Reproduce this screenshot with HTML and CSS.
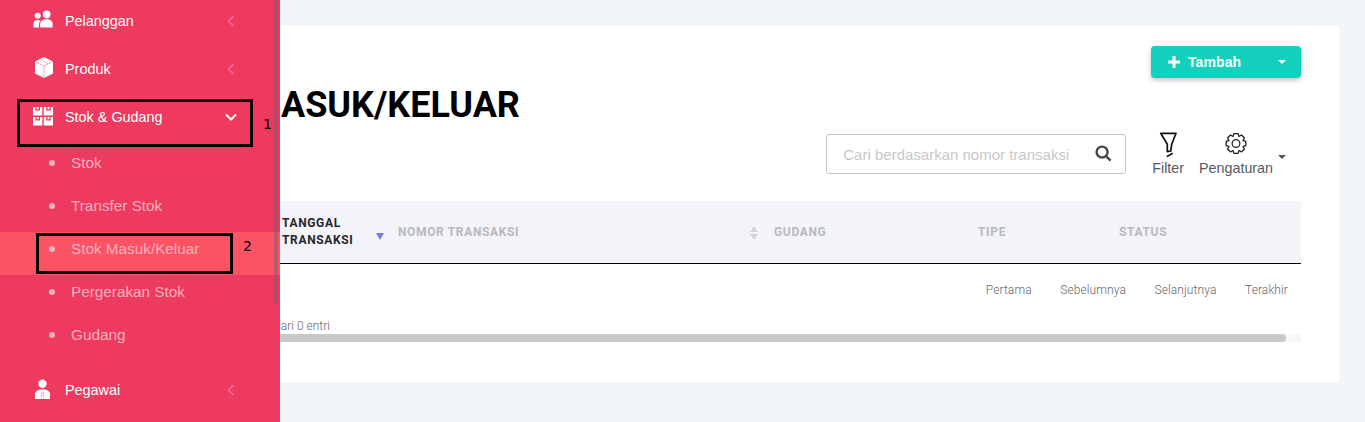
FILE: index.html
```html
<!DOCTYPE html>
<html lang="en">
<head>
    <meta charset="UTF-8">
    <meta name="viewport" content="width=device-width, initial-scale=1.0">
    <title>Stok Masuk/Keluar</title>
    <link rel="stylesheet" href="styles.css">
</head>
<body>
    <!-- Sidebar -->
    <aside class="sidebar">
        <nav class="nav">
            <div class="nav-item">
                <svg class="nav-icon" viewBox="0 0 20 20"><circle cx="4.7" cy="4.8" r="3"/><circle cx="13.7" cy="3.4" r="3.8"/><path d="M0.5 16.5 V12.5 C0.5 10.2 2.4 9 4.7 9 C5.8 9 6.8 9.2 7.6 9.7 C6.6 10.8 6 12 6 13.5 V16.5 Z"/><path d="M7.2 16.5 V13 C7.2 10 9.6 8.2 13.5 8.2 C17.4 8.2 19.6 10 19.6 13 V16.5 Z"/></svg>
                <span class="nav-label">Pelanggan</span>
                <svg class="nav-arrow" viewBox="0 0 8 12"><path d="M6.5 1 L1.5 6 L6.5 11"/></svg>
            </div>
            <div class="nav-item">
                <svg class="nav-icon" viewBox="0 0 20 20"><path d="M11 -2 L20 2.5 V14.5 L11 19 L2 14.5 V2.5 Z"/><path class="icon-line" d="M2 2.5 L11 7 L20 2.5 M11 7 V19 M6.5 0.3 L15.5 4.8"/></svg>
                <span class="nav-label">Produk</span>
                <svg class="nav-arrow" viewBox="0 0 8 12"><path d="M6.5 1 L1.5 6 L6.5 11"/></svg>
            </div>
            <div class="nav-item">
                <svg class="nav-icon" viewBox="0 0 20 20">
                    <path d="M0 0 H2.4 V3.4 H7 V0 H9.4 V8.6 H0 Z"/><rect x="3.7" y="0" width="2" height="2.2"/>
                    <path d="M10.8 0 H13.2 V3.4 H17.8 V0 H20 V8.6 H10.8 Z"/><rect x="14.5" y="0" width="2" height="2.2"/>
                    <path d="M0 10 H2.4 V13.4 H7 V10 H9.4 V18.6 H0 Z"/><rect x="3.7" y="10" width="2" height="2.2"/>
                    <path d="M10.8 10 H13.2 V13.4 H17.8 V10 H20 V18.6 H10.8 Z"/><rect x="14.5" y="10" width="2" height="2.2"/>
                </svg>
                <span class="nav-label">Stok &amp; Gudang</span>
                <svg class="nav-arrow open" viewBox="0 0 12 8"><path d="M1 1.5 L6 6.5 L11 1.5"/></svg>
            </div>
            <div class="submenu">
                <div class="sub-item"><span class="dot"></span>Stok</div>
                <div class="sub-item"><span class="dot"></span>Transfer Stok</div>
                <div class="sub-item active"><span class="dot"></span>Stok Masuk/Keluar</div>
                <div class="sub-item"><span class="dot"></span>Pergerakan Stok</div>
                <div class="sub-item"><span class="dot"></span>Gudang</div>
            </div>
            <div class="nav-item">
                <svg class="nav-icon" viewBox="0 0 20 20"><circle cx="9.5" cy="3.8" r="4.2"/><path d="M2 19 V14 C2 11.4 4.6 10 7 9.4 H12 C14.4 10 17 11.4 17 14 V19 Z"/><circle class="icon-line" cx="9.5" cy="13" r="1.3"/><circle class="icon-line" cx="9.5" cy="16" r="1.5"/></svg>
                <span class="nav-label">Pegawai</span>
                <svg class="nav-arrow" viewBox="0 0 8 12"><path d="M6.5 1 L1.5 6 L6.5 11"/></svg>
            </div>
        </nav>
        <div class="sidebar-scroll"></div>
    </aside>

    <!-- Annotations drawn over the sidebar -->
    <div class="mark mark-one"></div>
    <div class="mark-num mark-num-one">1</div>
    <div class="mark mark-two"></div>
    <div class="mark-num mark-num-two">2</div>

    <main class="card">
        <div class="top-actions">
            <button class="btn-add">
                <svg class="plus" viewBox="0 0 12 12"><path d="M4.5 0 H7.5 V4.5 H12 V7.5 H7.5 V12 H4.5 V7.5 H0 V4.5 H4.5 Z"/></svg>
                <span class="btn-add-text">Tambah</span>
                <span class="caret caret-white"></span>
            </button>
        </div>

        <h1 class="page-title">STOK MASUK/KELUAR</h1>

        <div class="toolbar">
            <div class="search">
                <span class="search-text">Cari berdasarkan nomor transaksi</span>
                <svg class="search-icon" viewBox="0 0 18 18"><circle cx="7.5" cy="7.5" r="5.8"/><path d="M12 12 L16.5 16.5"/></svg>
            </div>
            <div class="tool tool-filter">
                <svg class="tool-icon filter-icon" viewBox="0 0 22 27"><path d="M3.7 3.3 H19 L14.7 14.3 L13.7 21 L10.3 21.7 V14.3 Z"/><path d="M9.7 26.7 L15.7 23.3"/></svg>
                <span>Filter</span>
            </div>
            <div class="tool">
                <svg class="tool-icon" viewBox="0 0 24 24"><path d="M14.29 1.24 L15.11 4.3 L15.24 4.36 L17.99 2.77 L21.23 6.01 L19.64 8.76 L19.7 8.89 L22.76 9.71 V14.29 L19.7 15.11 L19.64 15.24 L21.23 17.99 L17.99 21.23 L15.24 19.64 L15.11 19.7 L14.29 22.76 H9.71 L8.89 19.7 L8.76 19.64 L6.01 21.23 L2.77 17.99 L4.36 15.24 L4.3 15.11 L1.24 14.29 V9.71 L4.3 8.89 L4.36 8.76 L2.77 6.01 L6.01 2.77 L8.76 4.36 L8.89 4.3 L9.71 1.24 Z"/><circle cx="12" cy="12" r="4.2"/></svg>
                <span>Pengaturan</span>
            </div>
            <span class="caret caret-dark"></span>
        </div>

        <table class="data-table">
            <colgroup>
                <col class="col-blank"><col class="col-date"><col class="col-number"><col class="col-store"><col class="col-type"><col class="col-status">
            </colgroup>
            <thead>
                <tr>
                    <th></th>
                    <th class="sorted">Tanggal<br>Transaksi<span class="sort-down"></span></th>
                    <th>Nomor Transaksi<span class="sort-both"></span></th>
                    <th>Gudang</th>
                    <th>Tipe</th>
                    <th>Status</th>
                </tr>
            </thead>
        </table>

        <div class="pager">
            <span>Pertama</span>
            <span>Sebelumnya</span>
            <span>Selanjutnya</span>
            <span>Terakhir</span>
        </div>

        <div class="info">Menampilkan 0 sampai 0 dari 0 entri</div>

        <div class="hscroll"><div class="hscroll-thumb"></div></div>
    </main>
</body>
</html>
```

FILE: styles.css
```css
html, body {
    height: 100%;
}

body {
    margin: 0;
    background: #f3f6f9;
    font-family: Roboto, sans-serif;
    overflow: hidden;
}

/* Sidebar */
.sidebar {
    position: absolute;
    top: 0;
    left: 0;
    bottom: 0;
    width: 280px;
    background: #ee3a5e;
    overflow: hidden;
    z-index: 5;
    font-family: 'Liberation Sans', sans-serif;
}

.nav {
    margin-top: -3px;
}

.nav-item {
    height: 48px;
    display: flex;
    align-items: center;
    padding-left: 33px;
    padding-right: 45px;
    color: #fff;
    font-size: 14.4px;
}

.nav-icon {
    width: 20px;
    height: 20px;
    fill: #fff;
    margin-right: 12px;
    flex-shrink: 0;
    overflow: visible;
}

.icon-line {
    fill: none;
    stroke: #f7a3b5;
    stroke-width: 0.9;
}

.nav-label {
    flex: 1;
}

.nav-arrow {
    width: 8px;
    height: 12px;
    fill: none;
    stroke: #f56fa8;
    stroke-width: 1.5;
}

.nav-arrow.open {
    width: 12px;
    height: 8px;
    margin-right: -2px;
    stroke: #fff;
    stroke-width: 2;
}

.submenu {
    padding: 5px 0;
}

.sub-item {
    height: 43px;
    box-sizing: border-box;
    padding: 0 0 10px 49px;
    display: flex;
    align-items: center;
    color: #fbb0bf;
    font-size: 15.3px;
}

.sub-item.active {
    background: #fb5264;
}

.dot {
    width: 6px;
    height: 6px;
    border-radius: 50%;
    background: #fbb0bf;
    margin-right: 16px;
}

.sidebar-scroll {
    position: absolute;
    top: 0;
    right: 2px;
    width: 4px;
    height: 303px;
    background: rgba(110, 90, 110, 0.45);
}

/* Black marks */
.mark {
    position: absolute;
    box-sizing: border-box;
    border: 3px solid #000;
    z-index: 6;
}

.mark-one {
    left: 17px;
    top: 99px;
    width: 236px;
    height: 48px;
}

.mark-two {
    left: 36px;
    top: 233px;
    width: 197px;
    height: 41px;
}

.mark-num {
    position: absolute;
    z-index: 6;
    font-family: 'DejaVu Sans', sans-serif;
    font-size: 14px;
    color: #000;
    line-height: 10px;
}

.mark-num-one {
    left: 263px;
    top: 119px;
}

.mark-num-two {
    left: 243px;
    top: 241px;
}

/* Card */
.card {
    box-sizing: border-box;
    margin: 26px 26px 0 101px;
    height: 356px;
    padding: 20px 38px 0 38px;
    background: #fff;
}

.top-actions {
    display: flex;
    justify-content: flex-end;
}

.btn-add {
    width: 150px;
    height: 32px;
    padding: 0 15px 0 17px;
    display: flex;
    align-items: center;
    border: none;
    border-radius: 4px;
    background: #12d0bc;
    color: #fff;
    font-family: 'Liberation Sans', sans-serif;
    font-size: 14px;
    font-weight: bold;
    letter-spacing: 0.1px;
    box-shadow: 0 2px 5px rgba(0, 0, 0, 0.25);
}

.plus {
    width: 12px;
    height: 12px;
    fill: #fff;
    margin-right: 8px;
}

.btn-add-text {
    flex: 1;
    text-align: left;
}

.caret {
    width: 0;
    height: 0;
    border-left: 4px solid transparent;
    border-right: 4px solid transparent;
}

.caret-white {
    border-top: 4px solid #fff;
}

.caret-dark {
    border-top: 4px solid #555;
    margin: 25px 15px 0 5px;
}

.page-title {
    margin: 13px 0 0 0;
    height: 28px;
    padding-left: 9.5px;
    font-size: 36px;
    line-height: 28px;
    font-weight: 700;
    color: #000;
}

.toolbar {
    display: flex;
    justify-content: flex-end;
    align-items: flex-start;
    height: 71px;
    margin-top: 11px;
}

.search {
    box-sizing: border-box;
    width: 300px;
    height: 40px;
    margin-top: 4px;
    padding: 0 13px 0 16px;
    display: flex;
    align-items: center;
    justify-content: space-between;
    border: 1px solid #c4c4c8;
    border-radius: 3px;
    font-family: 'Liberation Sans', sans-serif;
    font-size: 15px;
    color: #c8c8c8;
}

.search-icon {
    width: 17px;
    height: 17px;
    fill: none;
    stroke: #444a50;
    stroke-width: 2.6;
    margin-top: -2px;
}

.tool {
    display: flex;
    flex-direction: column;
    align-items: center;
    font-family: 'Liberation Sans', sans-serif;
    font-size: 14.3px;
    color: #55595f;
}

.tool-filter {
    margin: 0 15px 0 26px;
}

.tool-icon {
    width: 22px;
    height: 27px;
    fill: none;
    stroke: #222;
    stroke-width: 1.4;
    stroke-linejoin: round;
    margin-bottom: 3px;
}

.filter-icon {
    stroke: #111;
    stroke-width: 1.7;
}

/* Table */
.data-table {
    width: 100%;
    table-layout: fixed;
    border-collapse: collapse;
    border-bottom: 1px solid #000;
}

.col-blank { width: 143px; }
.col-date { width: 116px; }
.col-number { width: 376px; }
.col-store { width: 204px; }
.col-type { width: 141px; }

.data-table th {
    height: 62px;
    padding: 0;
    position: relative;
    background: #f3f4f9;
    text-align: left;
    text-transform: uppercase;
    font-size: 12px;
    line-height: 17px;
    font-weight: 700;
    letter-spacing: 0.65px;
    color: #b8b8bc;
}

.data-table th.sorted {
    color: #26262c;
}

.sort-down {
    position: absolute;
    right: 14px;
    top: 32px;
    border-left: 4px solid transparent;
    border-right: 4px solid transparent;
    border-top: 7px solid #7a7ddc;
}

.sort-both {
    position: absolute;
    right: 16px;
    top: 25px;
    width: 8px;
    height: 14px;
    background:
        linear-gradient(to bottom right, transparent 50%, #d5d5d8 50%) 0 0 / 4px 6px no-repeat,
        linear-gradient(to bottom left, transparent 50%, #d5d5d8 50%) 4px 0 / 4px 6px no-repeat,
        linear-gradient(to top right, transparent 50%, #d5d5d8 50%) 0 8px / 4px 6px no-repeat,
        linear-gradient(to top left, transparent 50%, #d5d5d8 50%) 4px 8px / 4px 6px no-repeat;
}

.pager {
    display: flex;
    justify-content: flex-end;
    gap: 28.5px;
    height: 16px;
    margin-top: 18px;
    padding-right: 13px;
    font-size: 12px;
    line-height: 16px;
    font-weight: 300;
    letter-spacing: 0.1px;
    color: #66666c;
}

.info {
    margin-top: 20px;
    height: 16px;
    font-size: 12px;
    line-height: 16px;
    font-weight: 300;
    color: #66666c;
    white-space: nowrap;
}

.hscroll {
    height: 8px;
    background: #f7f7f7;
}

.hscroll-thumb {
    width: calc(100% - 15px);
    height: 8px;
    background: #c9c9c9;
    border-radius: 0 4px 4px 0;
}
```
